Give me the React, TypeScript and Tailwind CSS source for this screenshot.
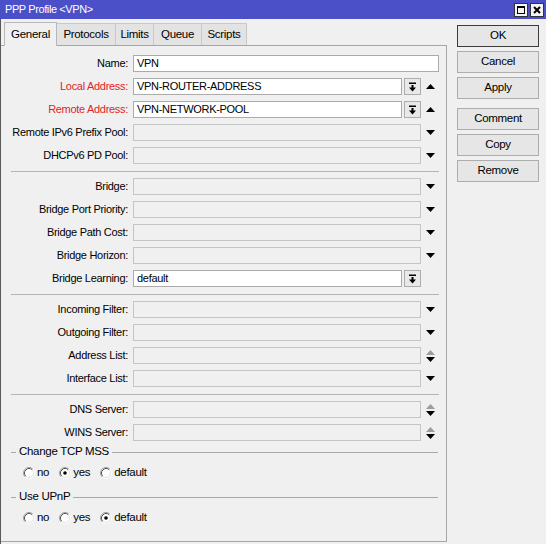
import React from "react";

const Up = ({ color = "#000" }: { color?: string }) => (
  <svg width="9" height="5" viewBox="0 0 9 5"><polygon points="0,5 9,5 4.5,0" fill={color} /></svg>
);
const Down = ({ color = "#000" }: { color?: string }) => (
  <svg width="9" height="5" viewBox="0 0 9 5"><polygon points="0,0 9,0 4.5,5" fill={color} /></svg>
);
const UpDown = () => (
  <div className="flex flex-col items-center gap-[2px]">
    <Up color="#9c9c9c" />
    <Down />
  </div>
);

const DropBtn = () => (
  <div className="w-[17px] h-[17px] shrink-0 border border-[#adadad] bg-[#e9e9e9] flex items-center justify-center">
    <svg width="9" height="10" viewBox="0 0 9 10">
      <rect x="1" y="0.5" width="7" height="1.5" fill="#000" />
      <rect x="3.5" y="3" width="2" height="3" fill="#000" />
      <polygon points="1,5.5 8,5.5 4.5,9.5" fill="#000" />
    </svg>
  </div>
);

type Kind = "full" | "drop-up" | "dis-down" | "drop" | "dis-updown";

const Row = ({ label, kind, value, red }: { label: string; kind: Kind; value?: string; red?: boolean }) => {
  const white = "h-[17px] border border-[#ababab] bg-white px-[3px] flex items-center text-black";
  const dis = "h-[17px] border border-[#c5c5c5] bg-[#f0f0f0]";
  return (
    <div className="flex items-center h-[23px]">
      <div className={`w-[127px] shrink-0 text-right whitespace-nowrap ${red ? "text-[#e0242a]" : "text-black"}`}>{label}</div>
      {kind === "full" ? (
        <div className={`ml-[5px] w-[306px] ${white}`}>{value}</div>
      ) : (
        <>
          <div className="ml-[5px] w-[288px] flex gap-[2px]">
            {kind === "drop-up" || kind === "drop" ? (
              <>
                <div className={`flex-1 ${white}`}>{value}</div>
                <DropBtn />
              </>
            ) : (
              <div className={`flex-1 ${dis}`} />
            )}
          </div>
          <div className="w-[18px] flex justify-center">
            {kind === "drop-up" && <Up />}
            {kind === "dis-down" && <Down />}
            {kind === "dis-updown" && <UpDown />}
          </div>
        </>
      )}
    </div>
  );
};

const Sep = () => (
  <div className="h-[8px] flex items-center">
    <div className="ml-[10px] w-[428px] h-px bg-[#b4b4b4]" />
  </div>
);

const Radio = ({ checked }: { checked?: boolean }) => (
  <svg width="12" height="12" viewBox="0 0 12 12">
    <circle cx="6" cy="6" r="4.5" fill="#fff" />
    <path d="M2.11 9.89 A5.5 5.5 0 0 1 9.89 2.11" stroke="#a0a0a0" fill="none" />
    <path d="M2.82 9.18 A4.5 4.5 0 0 1 9.18 2.82" stroke="#555" fill="none" />
    <path d="M9.89 2.11 A5.5 5.5 0 0 1 2.11 9.89" stroke="#fff" fill="none" />
    <path d="M9.18 2.82 A4.5 4.5 0 0 1 2.82 9.18" stroke="#e3e3e3" fill="none" />
    {checked && <circle cx="6" cy="6" r="1.8" fill="#000" />}
  </svg>
);

const Group = ({ title, sel }: { title: string; sel: number }) => (
  <>
    <div className="h-[16px] flex items-center">
      <div className="ml-[10px] w-[5px] h-px bg-[#a8a8a8]" />
      <span className="px-[3px] text-[11.5px]">{title}</span>
      <div className="flex-1 mr-[8px] h-px bg-[#a8a8a8]" />
    </div>
    <div className="h-[26px] flex items-center pl-[22px]">
      {["no", "yes", "default"].map((t, i) => (
        <div key={t} className="flex items-center gap-[2px] mr-[10px]">
          <Radio checked={i === sel} />
          <span className="text-[11.5px]">{t}</span>
        </div>
      ))}
    </div>
  </>
);

const Btn = ({ children, def }: { children: React.ReactNode; def?: boolean }) => (
  <div className={`h-[22px] w-[82px] flex items-center justify-center bg-[#e6e6e6] text-[11.5px] border ${def ? "border-[#3c3c3c]" : "border-[#adadad]"}`}>
    {children}
  </div>
);

export default function App() {
  const tabs = [
    { t: "General", w: "w-[53px]" },
    { t: "Protocols", w: "w-[59px]" },
    { t: "Limits", w: "w-[38px]" },
    { t: "Queue", w: "w-[48px]" },
    { t: "Scripts", w: "w-[45px]" },
  ];
  return (
    <div
      className="w-[546px] h-[544px] bg-[#f0f0f0] flex flex-col text-[11px] tracking-[-0.3px] text-black overflow-hidden"
      style={{ fontFamily: '"Liberation Sans", Arial, sans-serif' }}
    >
      <div className="h-[19px] shrink-0 bg-[#4b4fc8] flex items-center justify-between pl-[5px] pr-[2px]">
        <span className="text-white text-[11px] tracking-[-0.4px]">PPP Profile &lt;VPN&gt;</span>
        <div className="flex gap-[2px]">
          <div className="w-[14px] h-[14px] bg-[#f4f4f4] border border-[#333] flex items-center justify-center">
            <div className="w-[8px] h-[8px] border border-black border-t-2" />
          </div>
          <div className="w-[14px] h-[14px] bg-[#f4f4f4] border border-[#333] flex items-center justify-center">
            <svg width="8" height="8" viewBox="0 0 8 8">
              <path d="M1 1 L7 7 M7 1 L1 7" stroke="#000" strokeWidth="2" />
            </svg>
          </div>
        </div>
      </div>
      <div className="flex flex-1 border-l border-[#5a5a5a]">
        <div className="w-[446px] flex flex-col">
          <div className="h-[26px] flex items-end pl-[3px]">
            {tabs.map((tab, i) =>
              i === 0 ? (
                <div key={tab.t} className={`${tab.w} h-[24px] -mb-px relative z-10 bg-[#f0f0f0] border border-b-0 border-[#b8b8b8] flex items-center justify-center text-[11.5px]`}>
                  {tab.t}
                </div>
              ) : (
                <div key={tab.t} className={`${tab.w} h-[22px] bg-[#e3e3e3] border border-b-0 border-l-0 border-[#c8c8c8] flex items-center justify-center text-[11.5px]`}>
                  {tab.t}
                </div>
              )
            )}
          </div>
          <div className="flex-1 mb-[2px] border-t border-r border-b border-[#a6a6a6] pt-[6px]">
            <Row label="Name:" kind="full" value="VPN" />
            <Row label="Local Address:" kind="drop-up" value="VPN-ROUTER-ADDRESS" red />
            <Row label="Remote Address:" kind="drop-up" value="VPN-NETWORK-POOL" red />
            <Row label="Remote IPv6 Prefix Pool:" kind="dis-down" />
            <Row label="DHCPv6 PD Pool:" kind="dis-down" />
            <Sep />
            <Row label="Bridge:" kind="dis-down" />
            <Row label="Bridge Port Priority:" kind="dis-down" />
            <Row label="Bridge Path Cost:" kind="dis-down" />
            <Row label="Bridge Horizon:" kind="dis-down" />
            <Row label="Bridge Learning:" kind="drop" value="default" />
            <Sep />
            <Row label="Incoming Filter:" kind="dis-down" />
            <Row label="Outgoing Filter:" kind="dis-down" />
            <Row label="Address List:" kind="dis-updown" />
            <Row label="Interface List:" kind="dis-down" />
            <Sep />
            <Row label="DNS Server:" kind="dis-updown" />
            <Row label="WINS Server:" kind="dis-updown" />
            <Group title="Change TCP MSS" sel={1} />
            <div className="h-[3px]" />
            <Group title="Use UPnP" sel={2} />
          </div>
        </div>
        <div className="flex flex-col pl-[10px] pt-[6px]">
          <div className="flex flex-col gap-[4px]">
            <Btn def>OK</Btn>
            <Btn>Cancel</Btn>
            <Btn>Apply</Btn>
          </div>
          <div className="flex flex-col gap-[4px] mt-[9px]">
            <Btn>Comment</Btn>
            <Btn>Copy</Btn>
            <Btn>Remove</Btn>
          </div>
        </div>
      </div>
    </div>
  );
}
